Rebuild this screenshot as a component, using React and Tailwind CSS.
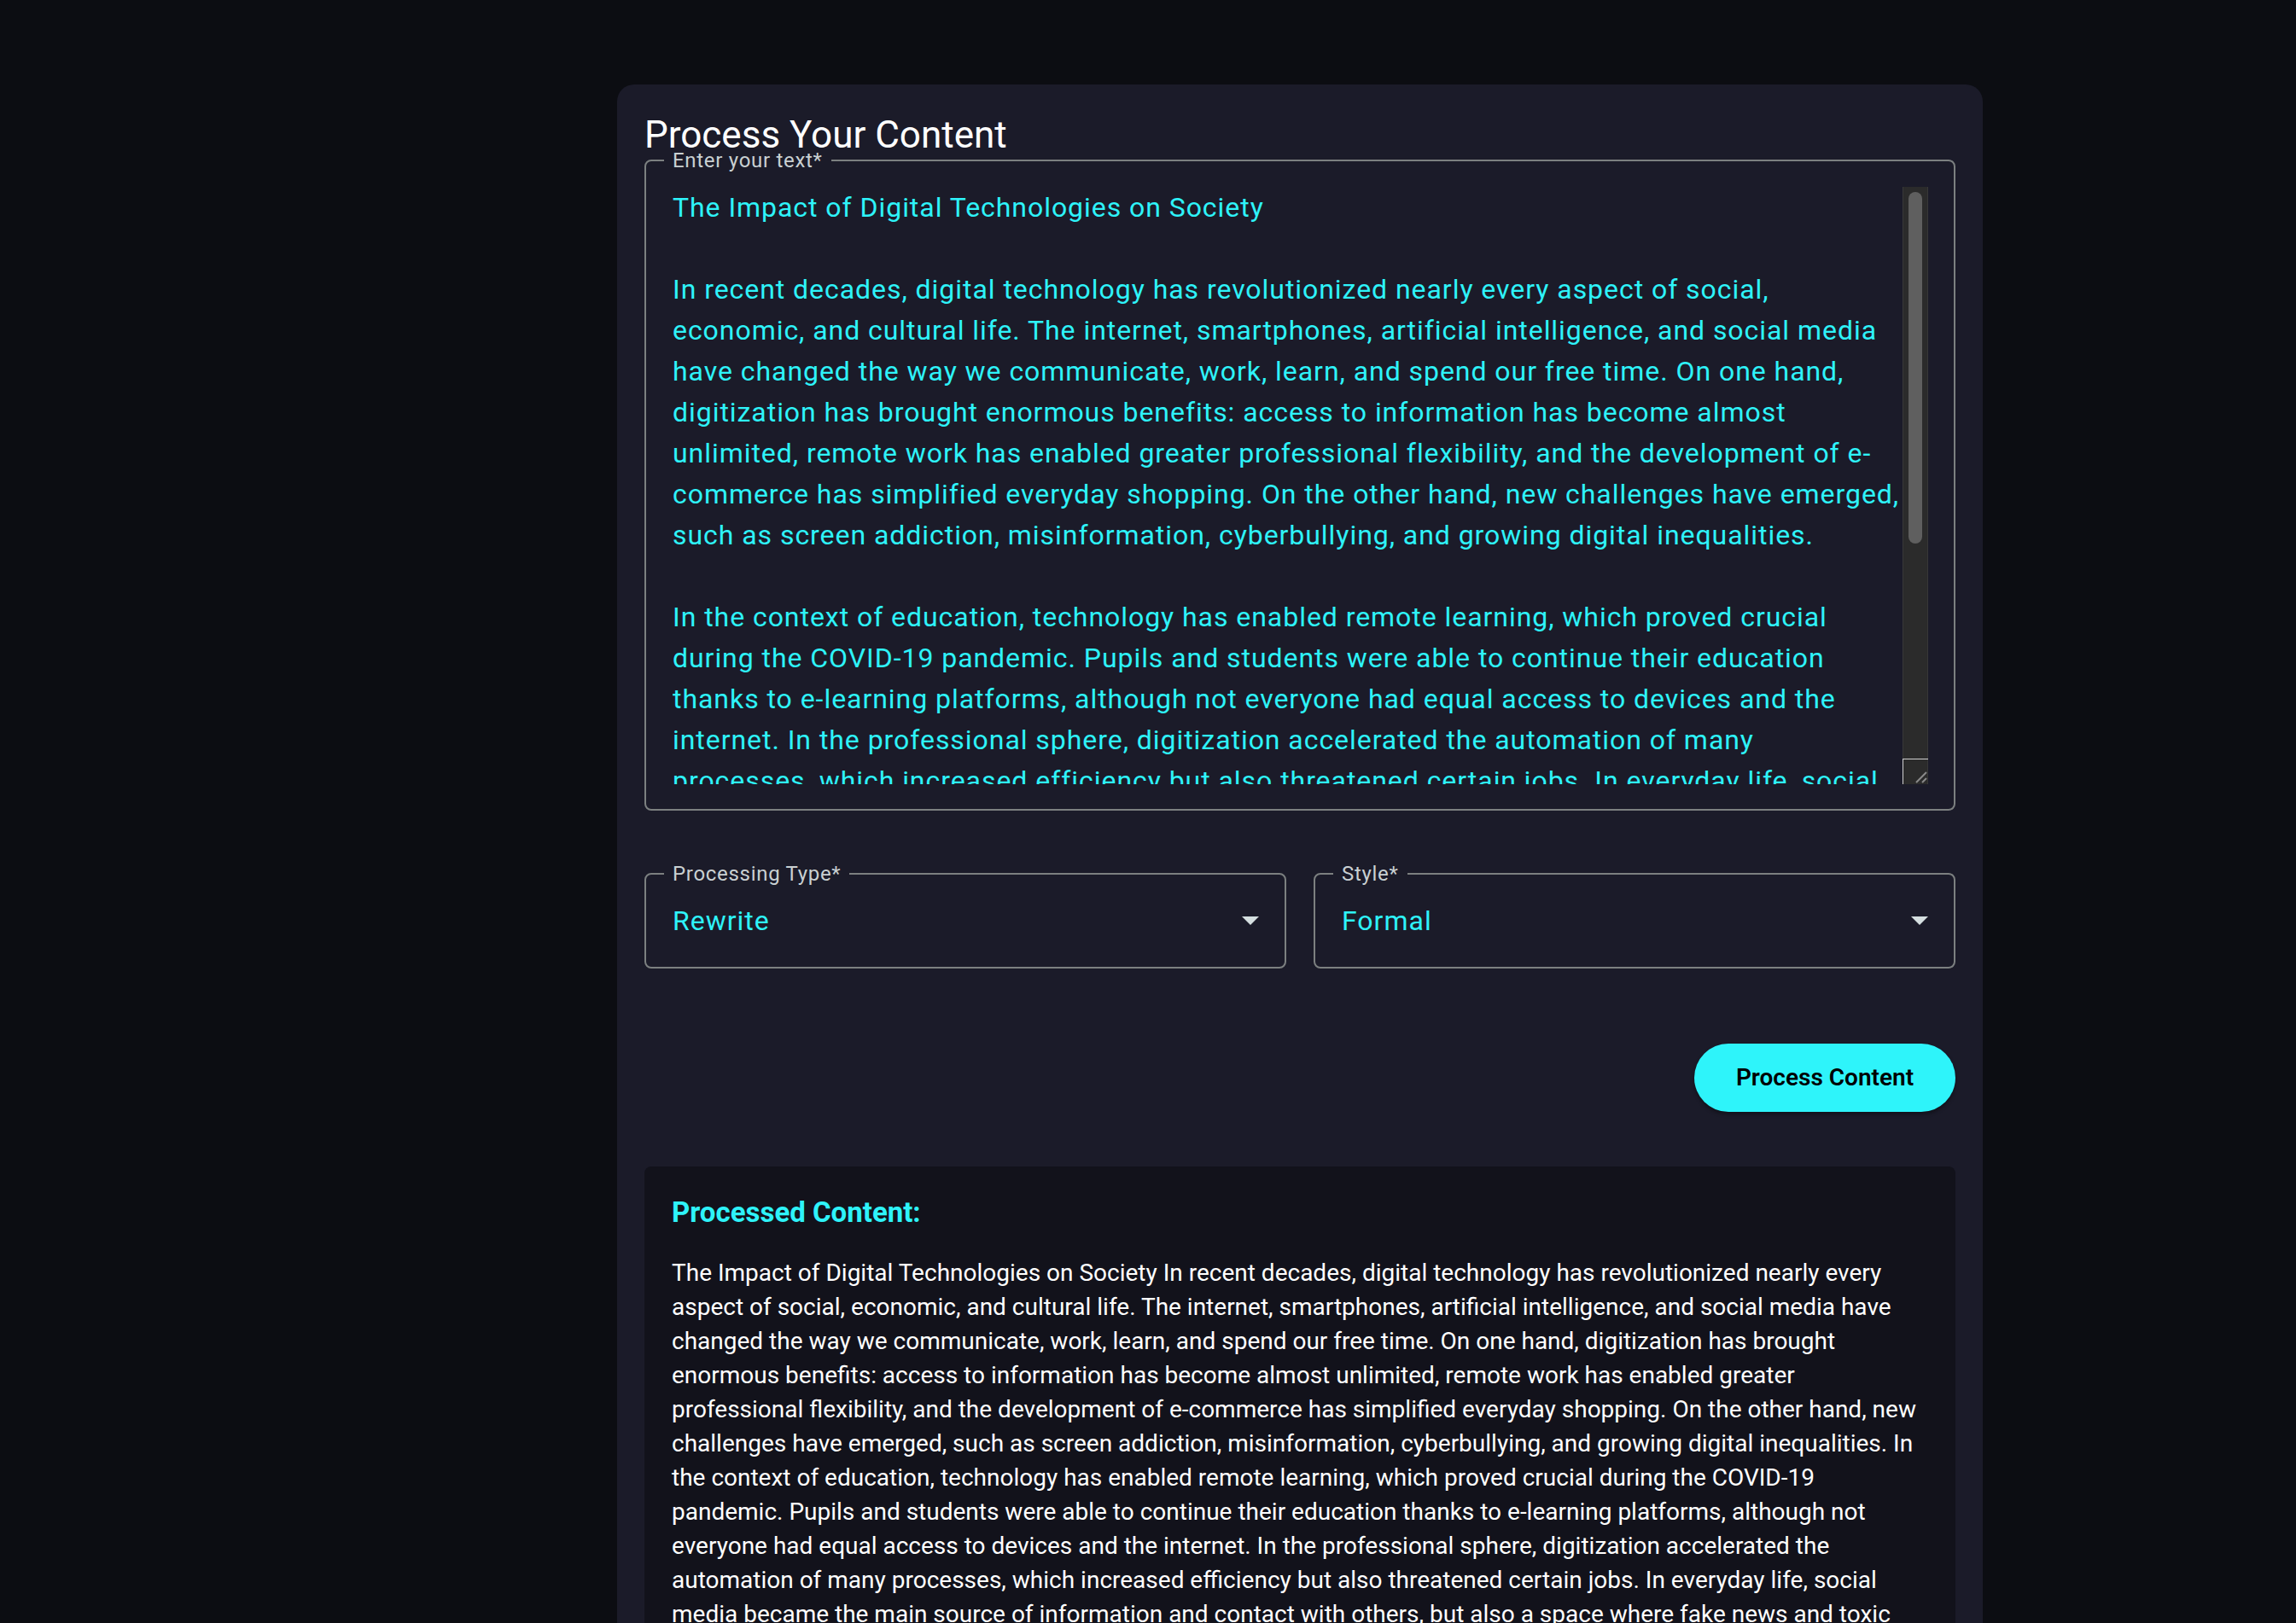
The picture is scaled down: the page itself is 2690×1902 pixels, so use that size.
import React from "react";

const inputLines = [
  "The Impact of Digital Technologies on Society",
  "",
  "In recent decades, digital technology has revolutionized nearly every aspect of social,",
  "economic, and cultural life. The internet, smartphones, artificial intelligence, and social media",
  "have changed the way we communicate, work, learn, and spend our free time. On one hand,",
  "digitization has brought enormous benefits: access to information has become almost",
  "unlimited, remote work has enabled greater professional flexibility, and the development of e-",
  "commerce has simplified everyday shopping. On the other hand, new challenges have emerged,",
  "such as screen addiction, misinformation, cyberbullying, and growing digital inequalities.",
  "",
  "In the context of education, technology has enabled remote learning, which proved crucial",
  "during the COVID-19 pandemic. Pupils and students were able to continue their education",
  "thanks to e-learning platforms, although not everyone had equal access to devices and the",
  "internet. In the professional sphere, digitization accelerated the automation of many",
  "processes, which increased efficiency but also threatened certain jobs. In everyday life, social",
];

const outputLines = [
  "The Impact of Digital Technologies on Society In recent decades, digital technology has revolutionized nearly every",
  "aspect of social, economic, and cultural life. The internet, smartphones, artificial intelligence, and social media have",
  "changed the way we communicate, work, learn, and spend our free time. On one hand, digitization has brought",
  "enormous benefits: access to information has become almost unlimited, remote work has enabled greater",
  "professional flexibility, and the development of e-commerce has simplified everyday shopping. On the other hand, new",
  "challenges have emerged, such as screen addiction, misinformation, cyberbullying, and growing digital inequalities. In",
  "the context of education, technology has enabled remote learning, which proved crucial during the COVID-19",
  "pandemic. Pupils and students were able to continue their education thanks to e-learning platforms, although not",
  "everyone had equal access to devices and the internet. In the professional sphere, digitization accelerated the",
  "automation of many processes, which increased efficiency but also threatened certain jobs. In everyday life, social",
  "media became the main source of information and contact with others, but also a space where fake news and toxic",
];

function Field({ label, children }) {
  return (
    <fieldset className="m-0 min-w-0 rounded-[8px] border-2 border-[#7c8080] p-0">
      <legend className="ml-[21px] px-[10px] text-[24px] leading-[14px] tracking-[0.7px] text-[#c9d0d2]">{label}</legend>
      {children}
    </fieldset>
  );
}

function ArrowDrop() {
  return (
    <svg width="20" height="10" viewBox="0 0 20 10">
      <path d="M0 0 L10 10 L20 0 Z" fill="#d5dfe0" />
    </svg>
  );
}

function SelectField({ label, value }) {
  return (
    <Field label={label}>
      <div className="flex items-center pl-[31px] pr-[30px] pt-[24px] pb-[30px]">
        <span className="flex-1 text-[32px] leading-[48px] tracking-[1px] text-[#2ef3f9]">{value}</span>
        <ArrowDrop />
      </div>
    </Field>
  );
}

export default function App() {
  return (
    <div className="h-[1902px] overflow-hidden bg-[#0c0d12] font-['Roboto','Liberation_Sans',sans-serif]">
      <div className="ml-[723px] mt-[99px] w-[1600px] rounded-[20px] bg-[#1b1b29] px-[32px] pt-[37px] pb-[32px]">
        <h2 className="text-[44px] leading-[45px] font-normal text-white">Process Your Content</h2>

        {/* Text input */}
        <Field label="Enter your text*">
          <div className="flex h-[753px] pl-[31px] pr-[30px] pt-[24px] pb-[29px]">
            <div className="flex-1 overflow-hidden text-[32px] leading-[48px] tracking-[0.95px] text-[#2ef3f9]">
              {inputLines.map((line, i) => (
                <div key={i} className="h-[48px] whitespace-pre">{line}</div>
              ))}
            </div>
            <div className="flex w-[30px] flex-col bg-[#2b2b2b] shadow-[inset_1px_0_#383838,inset_-1px_0_#383838]">
              <div className="mx-auto mt-[6px] h-[412px] w-[16px] rounded-full bg-[#5f5f5f]" />
              <div className="flex-1" />
              <div className="h-[30px] border-t border-l border-[#d0d0d0]">
                <svg width="29" height="29" viewBox="0 0 29 29">
                  <path d="M15 27 L27 15 M22 27 L27 22" stroke="#8a8a8a" strokeWidth="2" />
                </svg>
              </div>
            </div>
          </div>
        </Field>

        {/* Selects */}
        <div className="mt-[67px] grid grid-cols-2 gap-[32px]">
          <SelectField label="Processing Type*" value="Rewrite" />
          <SelectField label="Style*" value="Formal" />
        </div>

        <div className="mt-[88px] flex justify-end">
          <button className="h-[80px] w-[306px] rounded-full bg-[#2ef4fa] text-[28px] font-semibold text-black shadow-[0_3px_4px_rgba(0,0,0,0.35)]">
            Process Content
          </button>
        </div>

        {/* Result */}
        <div className="mt-[64px] rounded-[8px] bg-[#12121b] px-[32px] pt-[33px] pb-[32px]">
          <h3 className="mb-[30px] text-[33px] leading-[42px] font-bold text-[#2ef3f9]">Processed Content:</h3>
          <div className="text-[28px] leading-[40px] text-white">
            {outputLines.map((line, i) => (
              <div key={i} className="whitespace-nowrap">{line}</div>
            ))}
          </div>
        </div>
      </div>
    </div>
  );
}
